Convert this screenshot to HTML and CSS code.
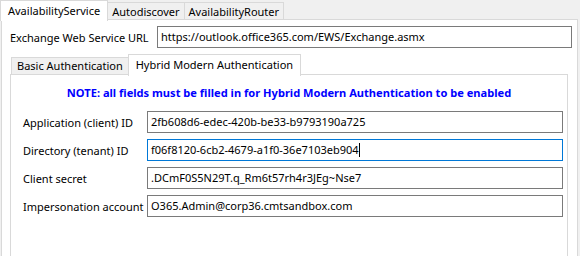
FILE: index.html
```html
<!DOCTYPE html>
<html lang="en">

<head>
    <meta charset="utf-8">
    <title>Availability settings</title>
    <link rel="stylesheet" href="styles.css">
</head>

<body>

    <div class="faner">
        <div class="fane valgt">AvailabilityService</div>
        <div class="fane">Autodiscover</div>
        <div class="fane">AvailabilityRouter</div>
    </div>

    <div class="panel">
        <div class="url-raekke">
            <label>Exchange Web Service URL</label>
            <div class="felt">https://outlook.office365.com/EWS/Exchange.asmx</div>
        </div>

        <div class="indre-faner">
            <div class="indre-fane">Basic Authentication</div>
            <div class="indre-fane valgt">Hybrid Modern Authentication</div>
        </div>

        <div class="indre-panel">
            <p class="note">NOTE: all fields must be filled in for Hybrid Modern Authentication to be enabled</p>

            <div class="raekke">
                <label>Application (client) ID</label>
                <div class="felt">2fb608d6-edec-420b-be33-b9793190a725</div>
            </div>
            <div class="raekke">
                <label>Directory (tenant) ID</label>
                <div class="felt aktiv">f06f8120-6cb2-4679-a1f0-36e7103eb904<span class="markoer"></span></div>
            </div>
            <div class="raekke">
                <label>Client secret</label>
                <div class="felt">.DCmF0S5N29T.q_Rm6t57rh4r3JEg~Nse7</div>
            </div>
            <div class="raekke">
                <label>Impersonation account</label>
                <div class="felt">O365.Admin@corp36.cmtsandbox.com</div>
            </div>
        </div>
    </div>

</body>

</html>
```

FILE: styles.css
```css
body {
    margin: 0;
    height: 256px;
    overflow: hidden;
    background-color: #f0f0f0;
    font-family: 'Noto Sans', sans-serif;
    font-size: 11px;
    color: #000;
}

label {
    white-space: nowrap;
    flex-shrink: 0;
}

.faner {
    display: flex;
    padding-left: 1px;
    height: 19px;
}

.fane {
    background-color: #f0f0f0;
    border: 1px solid #d9d9d9;
    border-bottom: none;
    margin-top: 2px;
    padding: 0 4px;
    line-height: 17px;
    margin-left: -1px;
}

.fane.valgt {
    background-color: #fff;
    margin-top: 0;
    height: 20px;
    line-height: 19px;
    padding: 0 7px;
    position: relative;
    z-index: 1;
}

.panel {
    background-color: #fff;
    border: 1px solid #d9d9d9;
    margin: 0 2px 0 1px;
    height: 400px;
    padding: 6px 5px 0 8px;
}

.url-raekke {
    display: flex;
    align-items: center;
}

.url-raekke label {
    width: 147px;
}

.felt {
    flex: 1;
    border: 1px solid #7a7a7a;
    height: 20px;
    line-height: 20px;
    padding: 0 3px;
    white-space: nowrap;
}

.felt.aktiv {
    border-color: #0078d7;
}

.markoer {
    display: inline-block;
    width: 1px;
    height: 14px;
    background-color: #000;
    vertical-align: -3px;
}

.indre-faner {
    display: flex;
    margin-top: 6px;
    padding-left: 1px;
    height: 20px;
}

.indre-fane {
    background-color: #f0f0f0;
    border: 1px solid #d9d9d9;
    border-bottom: none;
    margin-top: 3px;
    padding: 0 5px;
    line-height: 16px;
}

.indre-fane.valgt {
    background-color: #fff;
    margin-top: 0;
    margin-left: -1px;
    height: 21px;
    line-height: 19px;
    padding: 0 7px;
    position: relative;
    z-index: 1;
}

.indre-panel {
    background-color: #fff;
    border: 1px solid #d9d9d9;
    margin-right: 4px;
    height: 300px;
    padding: 0 4px 0 12px;
}

.note {
    margin: 10px 0 11px;
    text-align: center;
    color: #0000ff;
    font-weight: bold;
    font-size: 11.1px;
    padding-right: 8px;
}

.raekke {
    display: flex;
    align-items: center;
    margin-bottom: 6px;
}

.raekke label {
    width: 124px;
}
```
